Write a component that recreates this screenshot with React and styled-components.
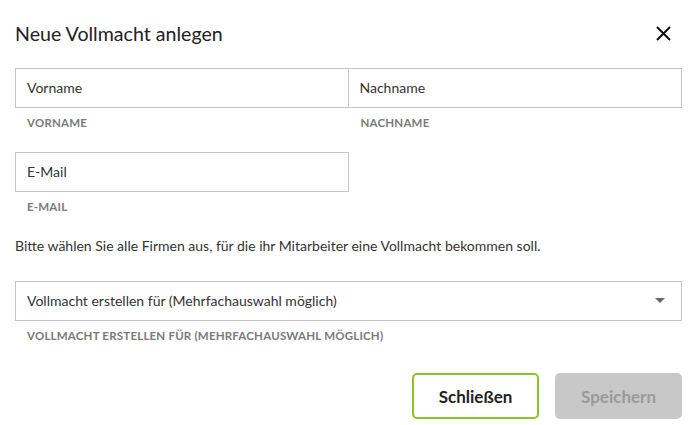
import React from "react";
import styled, { createGlobalStyle } from "styled-components";

const GlobalStyle = createGlobalStyle`
  html, body {
    margin: 0;
    padding: 0;
    background: #ffffff;
  }
  body {
    font-family: "Lato", "Open Sans", sans-serif;
    color: #222;
  }
`;

const Modal = styled.div`
  width: 667px;
  padding: 0 14px 0 15px;
  box-sizing: content-box;
`;

const Header = styled.div`
  display: flex;
  align-items: center;
  justify-content: space-between;
  height: 68px;
  padding-bottom: 2px;
  box-sizing: border-box;
`;

const Title = styled.h2`
  margin: 0;
  font-size: 19.6px;
  font-weight: 400;
  color: #222;
`;

const CloseButton = styled.button`
  border: none;
  background: none;
  padding: 0;
  margin-right: 10px;
  width: 18px;
  height: 18px;
  display: flex;
  align-items: center;
  justify-content: center;
  cursor: pointer;
`;

const Row = styled.div`
  display: grid;
  grid-template-columns: 1fr 1fr;
`;

const Field = styled.div`
  display: flex;
  flex-direction: column;
`;

const Box = styled.div`
  height: 40px;
  box-sizing: border-box;
  border: 1px solid #c4c4c4;
  margin-left: ${(p) => (p.$joined ? "-1px" : "0")};
  display: flex;
  align-items: center;
  justify-content: space-between;
  padding: 0 16px 1px 11px;
  font-size: 14px;
  color: #333;
`;

const Label = styled.div`
  font-size: 11.5px;
  font-weight: 700;
  letter-spacing: 0.2px;
  color: #7a7a7a;
  text-transform: uppercase;
  padding: 8px 0 0 12px;
  height: 44px;
  box-sizing: border-box;
`;

const Hint = styled.p`
  margin: 0;
  height: 45px;
  padding-top: 1px;
  box-sizing: border-box;
  font-size: 14px;
  color: #333;
`;

const Caret = styled.span`
  width: 0;
  height: 0;
  border-left: 5px solid transparent;
  border-right: 5px solid transparent;
  border-top: 5px solid #666;
`;

const Footer = styled.div`
  display: flex;
  justify-content: flex-end;
  gap: 16px;
  padding-top: 8px;
`;

const Button = styled.button`
  width: 127px;
  height: 46px;
  box-sizing: border-box;
  border-radius: 5px;
  font-family: inherit;
  font-size: 17px;
  font-weight: 700;
  border: 2px solid ${(p) => (p.$primary ? "#c8c8c8" : "#8cc31e")};
  background: ${(p) => (p.$primary ? "#c8c8c8" : "#ffffff")};
  color: ${(p) => (p.$primary ? "#9a9a9a" : "#222")};
`;

export default function App() {
  return (
    <>
      <GlobalStyle />
      <Modal>
        <Header>
          <Title>Neue Vollmacht anlegen</Title>
          <CloseButton aria-label="Schließen">
            <svg width="15" height="15" viewBox="0 0 15 15">
              <path d="M1 1 L14 14 M14 1 L1 14" stroke="#111" strokeWidth="2" />
            </svg>
          </CloseButton>
        </Header>
        <Row>
          <Field>
            <Box>Vorname</Box>
            <Label>Vorname</Label>
          </Field>
          <Field>
            <Box $joined>Nachname</Box>
            <Label>Nachname</Label>
          </Field>
        </Row>
        <Row>
          <Field>
            <Box>E-Mail</Box>
            <Label>E-Mail</Label>
          </Field>
        </Row>
        <Hint>
          Bitte wählen Sie alle Firmen aus, für die ihr Mitarbeiter eine
          Vollmacht bekommen soll.
        </Hint>
        <Field>
          <Box>
            Vollmacht erstellen für (Mehrfachauswahl möglich)
            <Caret />
          </Box>
          <Label>Vollmacht erstellen für (Mehrfachauswahl möglich)</Label>
        </Field>
        <Footer>
          <Button>Schließen</Button>
          <Button $primary disabled>
            Speichern
          </Button>
        </Footer>
      </Modal>
    </>
  );
}
